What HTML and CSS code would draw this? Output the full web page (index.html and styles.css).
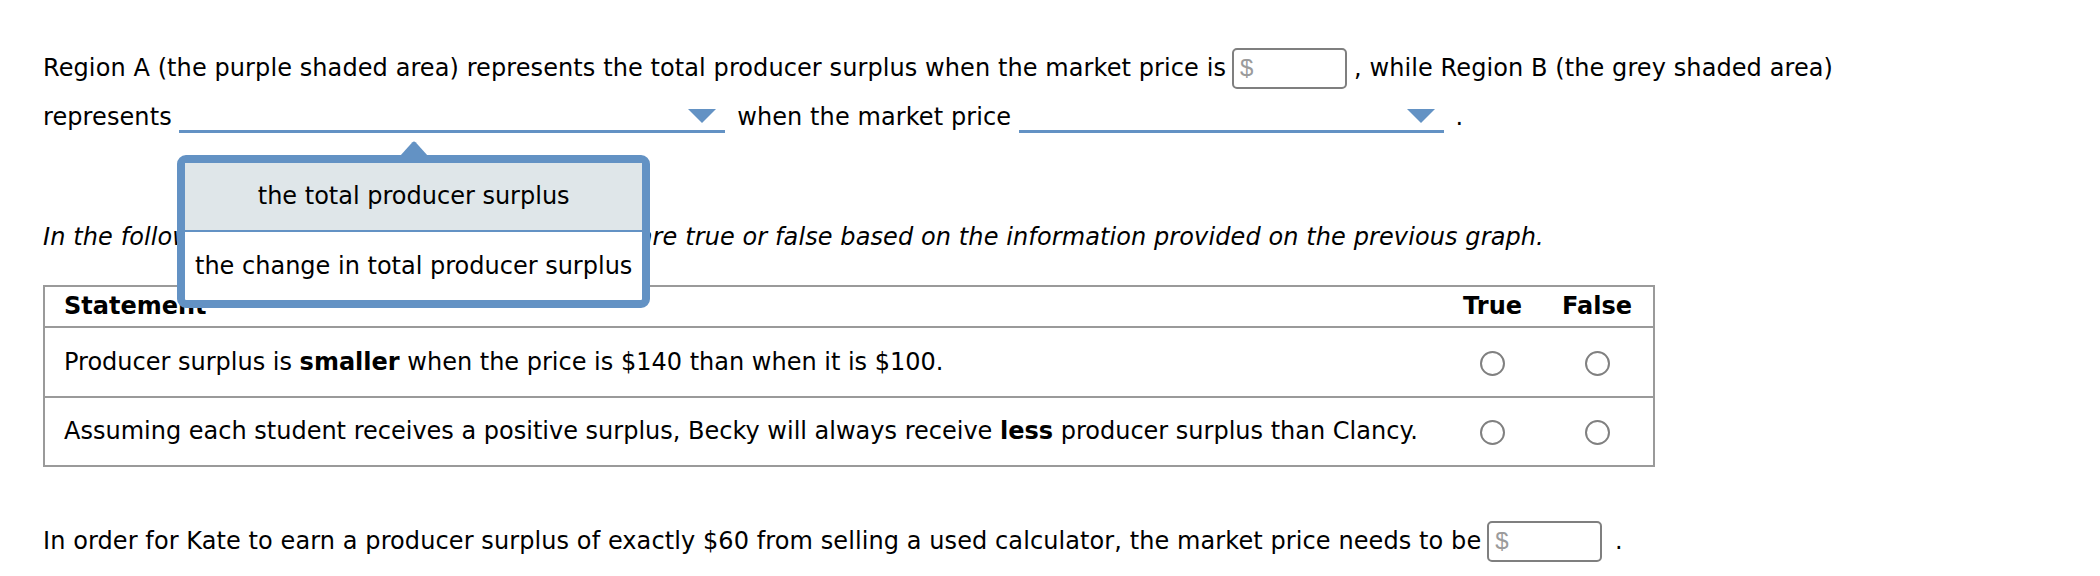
FILE: index.html
```html
<!DOCTYPE html>
<html lang="en">
<head>
<meta charset="utf-8">
<title>Producer surplus</title>
<link rel="stylesheet" href="styles.css">
</head>
<body>
<div class="page">
  <p class="q">Region A (the purple shaded area) represents the total producer surplus when the market price is<span class="field first">$</span>, while Region B (the grey shaded area) represents <span class="dropdown wide"><span class="caret"><svg width="28" height="14" viewBox="0 0 28 14"><path d="M0 0 L28 0 L14 14 Z" fill="#6392c4"/></svg></span></span> when the market price <span class="dropdown narrow"><span class="caret"><svg width="28" height="14" viewBox="0 0 28 14"><path d="M0 0 L28 0 L14 14 Z" fill="#6392c4"/></svg></span></span> .</p>

  <p class="instr">In the following table, indicate whether the rows are true or false based on the information provided on the previous graph.</p>

  <table class="tf">
    <thead>
      <tr>
        <th class="stmt">Statement</th>
        <th class="col">True</th>
        <th class="col">False</th>
      </tr>
    </thead>
    <tbody>
      <tr class="r1">
        <td class="stmt">Producer surplus is <b>smaller</b> when the price is $140 than when it is $100.</td>
        <td><span class="radio"></span></td>
        <td><span class="radio"></span></td>
      </tr>
      <tr class="r2">
        <td class="stmt">Assuming each student receives a positive surplus, Becky will always receive <b>less</b> producer surplus than Clancy.</td>
        <td><span class="radio"></span></td>
        <td><span class="radio"></span></td>
      </tr>
    </tbody>
  </table>

  <p class="last">In order for Kate to earn a producer surplus of exactly $60 from selling a used calculator, the market price needs to be<span class="field second">$</span> .</p>

  <div class="popup">
    <span class="popup-arrow"><svg width="28" height="15" viewBox="0 0 28 15"><path d="M0 15 L12.4 1.2 Q14 -0.4 15.6 1.2 L28 15 Z" fill="#6392c4"/></svg></span>
    <div class="opt opt1">the total producer surplus</div>
    <div class="opt opt2">the change in total producer surplus</div>
  </div>
</div>
</body>
</html>
```

FILE: styles.css
```css
html, body {
  margin: 0;
  padding: 0;
  background: #ffffff;
}

.page {
  position: relative;
  width: 1880px;
  padding: 44px 0 0 43px;
  font-family: "DejaVu Sans", Verdana, sans-serif;
  font-size: 24px;
  line-height: 49px;
  color: #000000;
}

p {
  margin: 0;
}

.q,
.last {
  letter-spacing: 0.09px;
}

.field {
  display: inline-block;
  box-sizing: border-box;
  width: 115px;
  height: 41px;
  border: 2px solid #7f7f7f;
  border-radius: 5px;
  padding-left: 6px;
  font-family: "Liberation Sans", Arial, sans-serif;
  line-height: 36px;
  letter-spacing: 0;
  color: #9b9b9b;
  margin-left: 6px;
}

.field.first {
  margin-right: 7px;
}

.field.second {
  margin-right: 5px;
}

.dropdown {
  display: inline-block;
  box-sizing: border-box;
  height: 38px;
  vertical-align: -8px;
  overflow: hidden;
  border-bottom: 3px solid #6392c4;
  padding: 14px 9px 0 0;
  margin-right: 4px;
}

.dropdown.wide {
  width: 546px;
}

.dropdown.narrow {
  width: 425px;
}

.caret {
  display: block;
  width: 28px;
  height: 14px;
  margin-left: auto;
}

.caret svg,
.popup-arrow svg {
  display: block;
}

.instr {
  font-style: italic;
  letter-spacing: 0.1px;
  margin-top: 71px;
}

.tf {
  margin-top: 23px;
  width: 1612px;
  border-collapse: separate;
  border-spacing: 0;
  border: 2px solid #9a9a9a;
}

.tf th {
  font-weight: bold;
  line-height: 39px;
  padding: 0 21px;
  text-align: center;
  white-space: nowrap;
}

.tf th.stmt {
  width: 100%;
  text-align: left;
  padding-left: 19px;
}

.tf td {
  border-top: 2px solid #9a9a9a;
  padding: 0 21px;
  text-align: center;
  white-space: nowrap;
}

.tf td.stmt {
  text-align: left;
  padding-left: 19px;
}

.tf .col:nth-child(2),
.tf td:nth-child(2) {
  padding: 0 19px 0 23px;
}

.r1 td {
  line-height: 68px;
}

.r2 td {
  line-height: 67px;
}

.radio {
  display: inline-block;
  box-sizing: border-box;
  width: 25px;
  height: 25px;
  border: 2px solid #808080;
  border-radius: 50%;
  background: #ffffff;
  vertical-align: middle;
}

.last {
  margin-top: 50px;
}

.popup {
  position: absolute;
  left: 177px;
  top: 155px;
  border: 8px solid #6392c4;
  border-radius: 9px;
  background: #ffffff;
  white-space: nowrap;
}

.popup-arrow {
  position: absolute;
  left: 215px;
  top: -22px;
}

.opt {
  text-align: center;
  padding: 0 10px;
}

.opt1 {
  background: #dfe6e9;
  line-height: 67px;
  border-bottom: 2px solid #6392c4;
}

.opt2 {
  line-height: 68px;
}
```
